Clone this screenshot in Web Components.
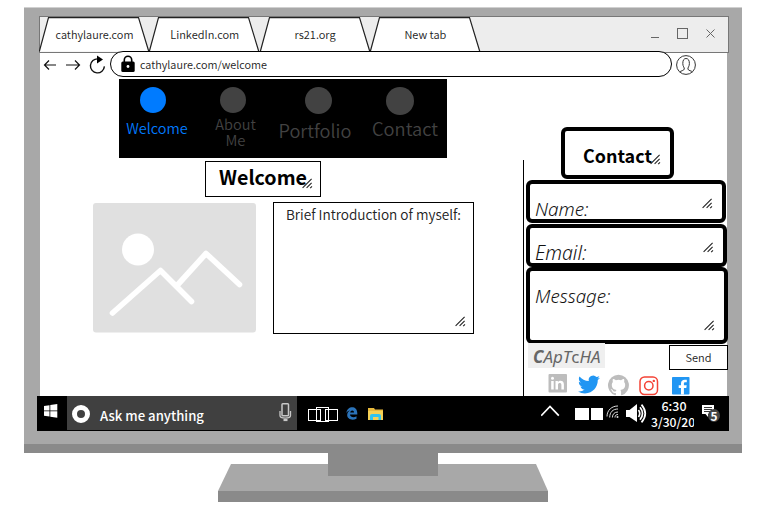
<!DOCTYPE html>
<html lang="en">
<head>
<meta charset="utf-8">
<title>cathylaure.com/welcome</title>
<style>
body{margin:0;background:#fff;font-family:"Noto Sans CJK SC","Noto Sans",sans-serif;color:#222;overflow:hidden}
</style>
</head>
<body>
<desktop-monitor>
  <browser-window>
    <browser-tab slot="tabs" text="cathylaure.com" w="78"></browser-tab>
    <browser-tab slot="tabs" text="LinkedIn.com" w="69"></browser-tab>
    <browser-tab slot="tabs" text="rs21.org" w="41"></browser-tab>
    <browser-tab slot="tabs" text="New tab" w="42"></browser-tab>
    <welcome-page></welcome-page>
  </browser-window>
  <task-bar slot="taskbar"></task-bar>
</desktop-monitor>
<script>
function define(name, css, html, setup) {
  customElements.define(name, class extends HTMLElement {
    connectedCallback() {
      if (this.shadowRoot) return;
      const root = this.attachShadow({ mode: 'open' });
      root.innerHTML = '<style>*{box-sizing:border-box}svg{display:block;flex:none}' + css + '</style>' +
        (typeof html === 'function' ? html(this) : html);
      if (setup) setup(this, root);
    }
  });
}

/* One line of text whose font size is chosen so that it is w pixels wide. */
define('fit-text',
  ':host{display:block;flex:none;white-space:pre;line-height:var(--lh,16px);height:var(--lh,16px)}span{display:inline-block;vertical-align:top;line-height:inherit}',
  '<span><slot></slot></span>',
  (el, root) => {
    const span = root.querySelector('span');
    span.style.fontSize = '100px';
    const w = +el.getAttribute('w');
    span.style.fontSize = (100 * w / span.getBoundingClientRect().width).toFixed(2) + 'px';
    el.style.width = w + 'px';
    el.style.fontSize = '0';
  });

define('resize-grip', ':host{display:block;flex:none;width:11px;height:11px}',
  `<svg width="11" height="11" viewBox="0 0 11 11" fill="none" stroke="#222" stroke-width="1.1"><path d="M.6 9.900 9.600.9M4.600 9.900l5-5M8.200 10.200l1.800-1.800"/></svg>`);

define('desktop-monitor', `
  :host{display:flex;flex-direction:column;width:718px;margin:7px 0 0 24px}
  .frame{height:446px;background:#a8a8a8;border-top:1px solid #d0d0d0;border-bottom:9px solid #8a8a8a;padding:8px 13px 0;display:flex;flex-direction:column}
  .screen{height:380px;margin-left:2px;width:690px}
  .stand{margin-left:194px}`,
  `<div class="frame"><div class="screen"><slot></slot></div><slot name="taskbar"></slot></div>
   <svg class="stand" width="330" height="49"><path d="M13 11h305l12 27v11H0V38z" fill="#a8a8a8"/><path d="M0 38h330v11H0zM110 0h110v23H110z" fill="#8a8a8a"/></svg>`);

define('browser-window', `
  :host{display:flex;flex-direction:column;height:380px}
  .tabs{height:37px;background:#ededed;border:1px solid #777;display:flex;flex:none}
  .tabs slot{display:flex;margin-left:-1px}
  .ctl{display:flex;margin-left:auto;align-items:center;padding:0 11px 2px 0}
  .bar{height:26px;margin-top:-2px;display:flex;align-items:center;flex:none;position:relative;width:688px;padding-left:1px}
  .pill{width:562px;height:26px;border:1px solid #000;border-radius:13px;background:#fff;display:flex;align-items:center;padding-left:10px;margin-left:4px;font-weight:350}
  .under{background:#fff;margin-left:1px;width:687px;height:343px;flex:none}
  .pill fit-text{margin-left:5px;--lh:16px;margin-bottom:0}`,
  `<div class="tabs"><slot name="tabs"></slot><div class="ctl">
    <svg width="66" height="14" fill="none" stroke="#666"><path d="M0 10.500h8"/><rect x="26.500" y="1.500" width="10" height="10"/><path d="M55.500 2.500l8 8M63.500 2.500l-8 8"/></svg></div></div>
   <div class="under"><div class="bar">
    <svg width="65" height="26" fill="none" stroke="#111" stroke-width="1.200"><path d="M15 14H3.500M8 9.500 3.500 14 8 18.500M25 14h13.500M34 9.500l4.500 4.500-4.500 4.500"/><path d="M57 7.900a7 7 0 1 0 6.400 7.500" stroke-width="1.400"/><path d="M56 4.500l6 4-6 4z" fill="#000" stroke="none"/></svg>
    <div class="pill"><svg width="14" height="18"><path d="M3.300 8V5a3.700 3.700 0 0 1 7.400 0v3" fill="none" stroke="#000" stroke-width="1.600"/><rect x=".3" y="6.500" width="13.400" height="10.500" rx="1.500"/><circle cx="7" cy="11.500" r="1.400" fill="#fff"/></svg><fit-text w="127">cathylaure.com/welcome</fit-text></div>
    <svg style="margin:2px 0 0 4px" width="20" height="20" fill="none" stroke="#333"><circle cx="10" cy="10" r="9.400"/><path d="M3.800 17c1-1.500 4-1 4.500-3 .2-1.500-1.500-2.500-1.500-5.500C6.800 5 8 3.500 10 3.500s3.400 1.500 3.400 5c0 3-1.700 4-1.500 5.500.5 2 3.500 1.500 4.500 3"/></svg>
   </div><slot></slot></div>`);

define('browser-tab', `
  :host{display:grid;width:110.300px;height:35px;flex:none;font-weight:350}
  svg,.l{grid-area:1/1}.l{display:grid;place-items:center;padding:0 0 1px 0}`,
  el => `<svg width="111" height="35"><path d="M.3 34.500 9.500.7H99.500L109.800 34.500" fill="#fff" stroke="#222" stroke-width="1.200"/></svg>
    <div class="l"><fit-text w="${el.getAttribute('w')}">${el.getAttribute('text')}</fit-text></div>`);

define('nav-item', `
  :host{display:flex;flex-direction:column;align-items:center;color:var(--c,#424242)}
  i{width:var(--d,26px);height:var(--d,26px);border-radius:50%;background:var(--c,#424242);margin-left:var(--dx,0);flex:none}`,
  '<i></i><slot></slot>');

define('main-nav', `
  :host{display:grid;grid-template-columns:75px 82px 77px 94px;width:328px;height:79px;background:#000;padding-top:8px;box-sizing:border-box;font-weight:350}
  nav-item:last-child{padding-left:9px}`,
  `<nav-item style="--c:#007bff;--dx:-7px"><fit-text w="61.500" style="margin:7px 0 0 1px">Welcome</fit-text></nav-item>
   <nav-item style="--dx:-4px"><fit-text w="40.500" style="margin:3px 0 0 1px">About</fit-text><fit-text w="20" style="margin-left:1px">Me</fit-text></nav-item>
   <nav-item style="--d:27px;--dx:8px"><fit-text w="73" style="margin:8px 0 0 1px">Portfolio</fit-text></nav-item>
   <nav-item style="--d:28px;--dx:-9px"><fit-text w="66" style="margin:5px 0 0 1px">Contact</fit-text></nav-item>`);

define('image-placeholder', ':host{display:block}',
  `<svg width="163" height="130"><rect width="163" height="129.500" rx="3" fill="#e0e0e0"/><circle cx="45" cy="46.500" r="16" fill="#fff"/><path d="M19.500 110 67.500 67.500l31 31M84 82.500l29-32 33.500 31" fill="none" stroke="#fff" stroke-width="5.600" stroke-linecap="round" stroke-linejoin="round"/></svg>`);

define('wire-box', ':host{display:flex;border:1px solid #000;background:#fff;box-sizing:border-box}', '<slot></slot>');

define('form-field', `
  :host{display:flex;justify-content:space-between;align-items:flex-start;border:4px solid #000;border-radius:6px;background:#fff;box-sizing:border-box;
    padding:0 9px 0 5px;font:italic 300 16px "Noto Sans","Open Sans",sans-serif;color:#111;--lh:24px}`,
  '<slot></slot><resize-grip style="margin-top:var(--g,14px)"></resize-grip>');

define('social-icons', ':host{display:flex;height:23px;align-items:flex-start}', `
  <svg width="19" height="19" viewBox="0 0 19 19"><rect x=".5" width="18.500" height="18.500" rx="1" fill="#bdbdbd"/><path d="M3.200 7h2.500v8.500H3.200zM7.500 7h2.400v1.200c1.500-2.300 6-1.900 6 2.100v5.200h-2.500v-4.600c0-2.500-3.400-2.400-3.400 0v4.600H7.500z" fill="#fff"/><circle cx="4.500" cy="4.300" r="1.500" fill="#fff"/></svg>
  <svg style="margin:-1px 0 0 11px" width="22" height="23" viewBox="0 0 24 24"><path fill="#2196f3" d="M23.950 4.570a10 10 0 0 1-2.820.78 4.960 4.960 0 0 0 2.160-2.730c-.95.56-2 .96-3.130 1.190a4.920 4.920 0 0 0-8.380 4.480C7.690 8.100 4.070 6.130 1.640 3.160a4.820 4.820 0 0 0-.67 2.480c0 1.710.87 3.210 2.190 4.100a4.900 4.900 0 0 1-2.230-.62v.06a4.920 4.920 0 0 0 3.950 4.830 5 5 0 0 1-2.210.08 4.940 4.940 0 0 0 4.600 3.420A9.870 9.870 0 0 1 0 19.540a14 14 0 0 0 7.560 2.210c9.050 0 14-7.500 14-13.980 0-.21 0-.42-.02-.63a9.940 9.940 0 0 0 2.460-2.550z"/></svg>
  <svg style="margin:0 0 0 8px" width="21" height="22" viewBox="0 0 24 24"><path fill="#bdbdbd" d="M12 .3a12 12 0 0 0-3.800 23.380c.6.120.83-.26.830-.57L9 21.070c-3.340.72-4.040-1.610-4.040-1.610-.55-1.390-1.340-1.760-1.340-1.760-1.080-.74.09-.73.09-.73 1.200.09 1.840 1.240 1.840 1.240 1.070 1.830 2.810 1.300 3.500 1 .1-.78.42-1.310.76-1.610-2.670-.3-5.470-1.330-5.470-5.930 0-1.310.47-2.380 1.240-3.220-.14-.3-.54-1.520.1-3.180 0 0 1-.32 3.300 1.230a11.500 11.500 0 0 1 6 0c2.280-1.550 3.290-1.230 3.290-1.230.64 1.660.24 2.880.12 3.180a4.650 4.650 0 0 1 1.230 3.220c0 4.610-2.800 5.630-5.480 5.920.42.36.81 1.100.81 2.220l-.01 3.290c0 .31.2.69.820.57A12 12 0 0 0 12 .3"/></svg>
  <svg style="margin:2px 0 0 10px" width="20" height="20" fill="none" stroke="#f44336" stroke-width="1.500"><rect x="1" y="1" width="17.500" height="17.500" rx="4.500"/><circle cx="9.800" cy="9.800" r="4.200"/><circle cx="14.800" cy="4.900" r="1.200" fill="#f44336" stroke="none"/></svg>
  <svg style="margin:3px 0 0 13px" width="18" height="18"><rect width="17.500" height="17.500" rx=".8" fill="#2196f3"/><path d="M9 17.500V11H6.700V8.300H9V6.500C9 4 10.500 2.800 12.700 2.800h2.100v2.500h-1.500c-1.200 0-1.400.6-1.400 1.400v1.600h2.800l-.4 2.700h-2.400v6.500z" fill="#fff"/></svg>`);

define('contact-form', `
  :host{display:flex;flex-direction:column;align-items:flex-start}
  .title{width:113px;height:52px;margin-left:35px;border:4px solid #000;border-radius:6px;display:flex;padding:12px 0 0 18px;font-weight:700;color:#000;--lh:24px}
  .foot{display:flex;width:202px;padding-left:2px;justify-content:space-between;height:27px}
  .cap{width:77px;height:25px;margin-top:-1px;background:#efefef;color:#666;padding-left:5px;font-family:"Noto Sans","Open Sans",sans-serif;font-style:italic;--lh:28px}
  wire-box{width:59px;height:25px;margin-top:1px;justify-content:center;--lh:23px;font-weight:350}
  .cap b{font-weight:700}.cap u{text-decoration:none;font-style:normal}`,
  `<div class="title"><fit-text w="69">Contact</fit-text><resize-grip style="margin:11px 0 0 -2px"></resize-grip></div>
   <form-field style="width:200px;height:43px;margin-top:1px"><fit-text w="53.500" style="margin-top:13px">Name:</fit-text></form-field>
   <form-field style="width:201px;height:43px;margin-top:1px;--g:14px"><fit-text w="51.500" style="margin-top:13px">Email:</fit-text></form-field>
   <form-field style="width:202px;height:77px;--g:49px"><fit-text w="75.500" style="margin-top:13px">Message:</fit-text></form-field>
   <div class="foot"><div class="cap"><fit-text w="67.500"><b>C</b>ApT<u>c</u>HA</fit-text></div><wire-box><fit-text w="26">Send</fit-text></wire-box></div>
   <social-icons style="margin:3px 0 0 22px"></social-icons>`);

define('welcome-page', `
  :host{display:grid;grid-template-columns:483px 1px 202px;height:319px}
  .main{padding:2px 0 0}
  main-nav{margin-left:79px}
  .h{width:116px;height:36px;margin:3px 0 0 165px;padding:3px 0 0 13px;font-weight:700;color:#000;--lh:24px}
  .row{display:flex;margin:5px 0 0 53px}
  image-placeholder{margin:1px 17px 0 0}
  .intro{width:201px;height:132px;flex-direction:column;padding:4px 0 0 12px;font-weight:350;--lh:15px}
  .intro resize-grip{margin:94px 0 0 169px}
  .line{background:#000;margin-top:83px}
  contact-form{margin:50px 0 0 2px}`,
  `<div class="main"><main-nav></main-nav>
    <wire-box class="h"><fit-text w="88">Welcome</fit-text><resize-grip style="margin:13px 0 0 -5px"></resize-grip></wire-box>
    <div class="row"><image-placeholder></image-placeholder><wire-box class="intro"><fit-text w="175">Brief Introduction of myself:</fit-text><resize-grip></resize-grip></wire-box></div></div>
   <div class="line"></div><contact-form></contact-form>`);

define('task-bar', `
  :host{display:flex;width:692px;height:35px;background:#000;color:#fff;position:relative}
  .start{width:30px;padding:8px 0 0 7px}
  .search{width:230px;height:34px;background:#404040;display:flex;padding-left:5px;font-weight:500}
  .search fit-text{margin:11px 0 0 10px;--lh:18px}
  .clock{width:43px;margin-left:4px;overflow:hidden;font-weight:500;padding-top:2px}
  .five{display:grid;place-items:center;width:12px;height:13px;border-radius:50%;background:#444;position:absolute;right:9px;top:13px;font-weight:700;--lh:13px}`,
  `<div class="start"><svg width="14" height="14" fill="#fff"><path d="M0 2l5.500-.8v5.300H0zM6.300 1l7-1v6.500h-7zM0 7.300h5.500v5.300L0 11.800zM6.300 7.300h7v6.400l-7-1z"/></svg></div>
   <div class="search"><svg style="margin-top:9px" width="18" height="18"><circle cx="9" cy="9" r="6.500" fill="none" stroke="#fff" stroke-width="5"/></svg>
     <fit-text w="104">Ask me anything</fit-text>
     <svg style="margin:7px 0 0 75px" width="13" height="19" fill="none" stroke="#c8c8c8"><rect x="3" y=".8" width="6.500" height="12" rx=".8" stroke-width="1.500"/><path d="M1 8v4.500c0 3.500 10.500 3.500 10.500 0V8" stroke-width="1.300"/><path d="M4.500 17h4" stroke-width="2.200"/></svg></div>
   <svg style="margin:11px 0 0 11px" width="31" height="16" fill="none" stroke="#fff"><rect x=".5" y="2.500" width="12" height="11"/><rect x="8.500" y=".5" width="12" height="14"/><rect x="17.500" y="2.500" width="12" height="11"/></svg>
   <svg style="margin:11px 0 0 7px" width="12" height="13"><path d="M.3 6C1.200-1.500 11.300-2 11.300 6.300v1.200H4c.2 3 4 3.400 6.500 1.800v2.400C5.800 14 .9 12 1.200 7.700 1.400 5.500 2.500 4.300 4 3.500 2.500 3.600 1.200 4.500.3 6zM4.200 5.600h3.900c0-2.700-3.600-2.700-3.900 0z" fill="#2b73b9"/></svg>
   <svg style="margin:12px 0 0 10px" width="16" height="13"><path d="M0 0h6l1 1.500h8V12H0z" fill="#e8b93c"/><path d="M0 3h15v9H0z" fill="#f5d055"/><path d="M2 12V8q0-2 2-2h7q2 0 2 2v4h-2.500V9H5v3z" fill="#30c3ee"/></svg>
   <svg style="margin:9px 0 0 157px" width="19" height="12" fill="none" stroke="#fff" stroke-width="1.700"><path d="M.2 10.700 9 1.500l8.800 9.200"/></svg>
   <svg style="margin:12px 0 0 15px" width="29" height="12" fill="#fff"><path d="M0 0h14v12H0zM16 0h12v12H16z"/></svg>
   <svg style="margin:9px 0 0 2px" width="13" height="14" fill="none" stroke="#ddd" stroke-width="1"><path d="M1 11.500C1 5 6 1 12 1M3.700 12.500C3.700 7 7 4 12 4M6.400 12.500C6.500 9 8.500 7 12 7M9 12.500c0-2 1-3 3-3"/><circle cx="11.500" cy="12" r="1" fill="#ddd" stroke="none"/></svg>
   <svg style="margin:8px 0 0 7px" width="21" height="20"><path d="M0 6h3.500L11 0v18L3.500 13H0z" fill="#fff"/><path d="M12.500 6q2.500 3.500 0 7M14 3.200q5 6.300 0 12.600M15.500.6q7.500 9 0 17.800" fill="none" stroke="#fff" stroke-width="1.700"/></svg>
   <div class="clock"><fit-text w="25" style="margin-left:10.500px">6:30</fit-text><fit-text w="58">3/30/2020</fit-text></div>
   <svg style="margin:9px 0 0 8px" width="13" height="13" fill="#fff"><path d="M0 0h12v9H6v3L3.500 9H0z"/><path d="M2 2.500h8M2 4.500h8M2 6.500h6" stroke="#222" stroke-width=".9"/></svg>
   <div class="five"><fit-text w="7">5</fit-text></div>`);
</script>
</body>
</html>
